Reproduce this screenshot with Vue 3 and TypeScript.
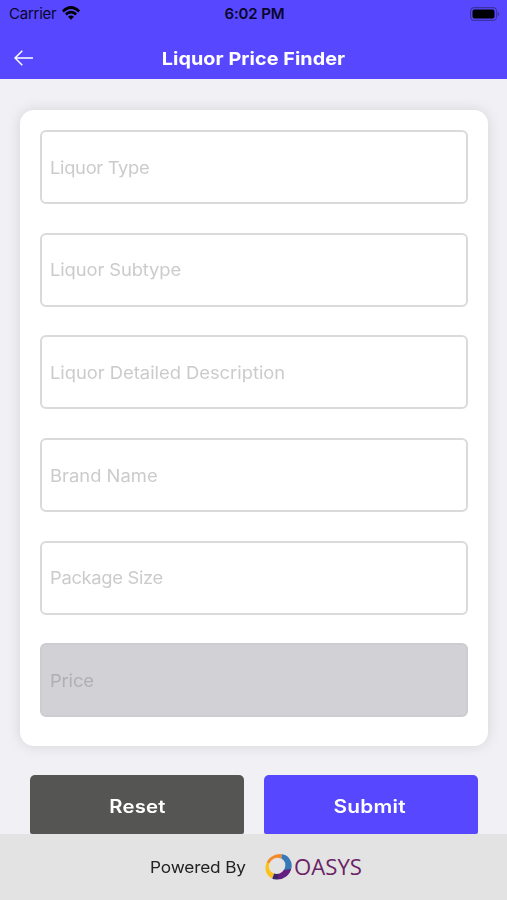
<script setup lang="ts">
interface Field {
  id: string
  label: string
  disabled?: boolean
}

const fields: Field[] = [
  { id: 'type', label: 'Liquor Type' },
  { id: 'subtype', label: 'Liquor Subtype' },
  { id: 'description', label: 'Liquor Detailed Description' },
  { id: 'brand', label: 'Brand Name' },
  { id: 'size', label: 'Package Size' },
  { id: 'price', label: 'Price', disabled: true },
]
</script>

<template>
  <div class="screen">
    <header class="top">
      <div class="status">
        <div class="carrier">
          <span>Carrier</span>
          <svg class="wifi" viewBox="0 0 18 14" width="18" height="14">
            <path d="M0 4.6C5 -1.5 13 -1.5 18 4.6L16.2 6.4C12 1.7 6 1.7 1.8 6.4Z" />
            <path d="M3 7.6C6.4 3.9 11.6 3.9 15 7.6L13.2 9.4C10.6 6.7 7.4 6.7 4.8 9.4Z" />
            <path d="M6 10.7C7.7 9 10.3 9 12 10.7L9 13.8Z" />
          </svg>
        </div>
        <span class="time">6:02 PM</span>
        <svg class="battery" viewBox="0 0 30 14" width="30" height="14">
          <rect class="shell" x="0.6" y="0.6" width="26" height="12.8" rx="3.6" />
          <rect x="2.5" y="2.4" width="22" height="9.2" rx="2" />
          <path class="cap" d="M27.8 5C29.9 5.8 29.9 8.2 27.8 9Z" />
        </svg>
      </div>
      <div class="nav">
        <svg class="back" viewBox="0 0 20 16" width="20" height="16">
          <path d="M19 8H1M8.3 .8L1 8L8.3 15.2" />
        </svg>
        <h1>Liquor Price Finder</h1>
      </div>
    </header>

    <main>
      <form class="card">
        <label v-for="field in fields" :key="field.id" class="field" :class="[field.id, { disabled: field.disabled }]">
          <span>{{ field.label }}</span>
        </label>
      </form>
      <div class="actions">
        <button class="reset" type="button"><span>Reset</span></button>
        <button class="submit" type="button"><span>Submit</span></button>
      </div>
    </main>

    <footer>
      <span class="powered">Powered By</span>
      <svg class="logo" viewBox="0 -6 102 40" width="102" height="40">
        <defs>
          <mask id="ring" maskUnits="userSpaceOnUse" x="-2" y="-2" width="32" height="32">
            <ellipse cx="13.6" cy="13.8" rx="13.6" ry="12.3" fill="#fff" transform="rotate(-38 13.6 13.8)" />
            <ellipse cx="12.1" cy="12.8" rx="8.5" ry="7.9" fill="#000" transform="rotate(-42 12.1 12.8)" />
          </mask>
        </defs>
        <g mask="url(#ring)">
          <path fill="#f58a2b" d="M-2 -2H17L16.4 8L12 13L-2 9Z" />
          <path fill="#fcc21b" d="M-2 8L12 13L6 28H-2Z" />
          <path fill="#3779b7" d="M17 -2H30V17H18L12 13L16.4 8Z" />
          <path fill="#642080" d="M12 13L18 17L30 15.5V30H13Z" />
          <path fill="#3d246b" d="M12 13L14 30H5.5Z" />
        </g>
        <text x="29" y="22.2" textLength="68" lengthAdjust="spacingAndGlyphs">OASYS</text>
      </svg>
    </footer>
  </div>
</template>

<style>
body {
  background: #f1f0f5;
}
</style>

<style scoped>
.screen {
  display: flex;
  flex-direction: column;
  width: 507px;
  height: 900px;
  overflow: hidden;
  background: #f1f0f5;
  font-family: Inter, "Open Sans", sans-serif;
}
.top {
  flex: none;
  height: 79px;
  background: #5748ff;
}
.status {
  display: grid;
  grid-template-columns: 1fr auto 1fr;
  align-items: center;
  height: 27px;
  padding: 0 7px 0 9px;
  color: #08062b;
  font-size: 15px;
}
.carrier {
  display: flex;
  align-items: center;
  gap: 6px;
  letter-spacing: -0.25px;
}
.wifi {
  margin-top: -2px;
}
.time {
  font-weight: 600;
  letter-spacing: -0.1px;
}
.battery {
  justify-self: end;
}
.shell {
  fill: none;
  stroke: #3c329f;
  stroke-width: 1.2;
}
.cap {
  fill: #3c329f;
}
.nav {
  display: grid;
  grid-template-columns: 40px 1fr 40px;
  align-items: center;
  height: 52px;
}
.back {
  margin: 10px 0 0 14px;
  fill: none;
  stroke: #fff;
  stroke-width: 1.5;
}
h1 {
  margin: 11px 0 0;
  color: #fff;
  font-size: 18px;
  font-weight: 700;
  line-height: 22px;
  letter-spacing: 0.05px;
  text-align: center;
  transform: scaleX(1.1);
}
main {
  flex: none;
  height: 755px;
  padding: 31px 19px 0 20px;
  box-sizing: border-box;
}
.card {
  display: flex;
  flex-direction: column;
  gap: 28.7px;
  height: 636px;
  padding: 20px;
  box-sizing: border-box;
  border-radius: 14px;
  background: #fff;
  box-shadow: 0 0 14px rgba(0, 0, 0, 0.12);
}
.field {
  display: flex;
  align-items: center;
  height: 74px;
  padding: 1px 8px 0;
  box-sizing: border-box;
  border: 2px solid #dadadb;
  border-radius: 6px;
  color: #cbcbcc;
  font-size: 17px;
  font-weight: 400;
}
.field span {
  transform: scaleX(1.08);
  transform-origin: left;
}
.type,
.size {
  letter-spacing: -0.3px;
}
.subtype {
  letter-spacing: -0.1px;
}
.description {
  letter-spacing: -0.02px;
}
.brand {
  letter-spacing: 0.02px;
}
.disabled {
  border-color: #cdccd0;
  background: #d2d1d6;
  color: #b0afb4;
  letter-spacing: -0.15px;
}
.actions {
  display: grid;
  grid-template-columns: 1fr 1fr;
  gap: 20px;
  padding: 29px 10px 0;
}
button {
  height: 59px;
  padding: 3px 0 0;
  border: 0;
  border-radius: 5px 5px 2px 2px;
  color: #fff;
  font: 600 18.3px/24px Inter, sans-serif;
  letter-spacing: 0.2px;
}
button span {
  display: inline-block;
  transform: scaleX(1.11);
}
.submit span {
  transform: scaleX(1.14);
}
.reset {
  background: #555554;
}
.submit {
  padding-right: 2px;
  background: #5748ff;
}
footer {
  display: flex;
  flex: 1;
  align-items: center;
  gap: 20px;
  padding-left: 150px;
  background: #e3e3e3;
}
.powered {
  width: 95px;
  color: #222;
  font-size: 16.5px;
  letter-spacing: -0.15px;
  white-space: nowrap;
  transform: scaleX(1.045);
  transform-origin: left;
}
.logo text {
  fill: #6b2466;
  font: 22.5px "Open Sans", sans-serif;
}
</style>
